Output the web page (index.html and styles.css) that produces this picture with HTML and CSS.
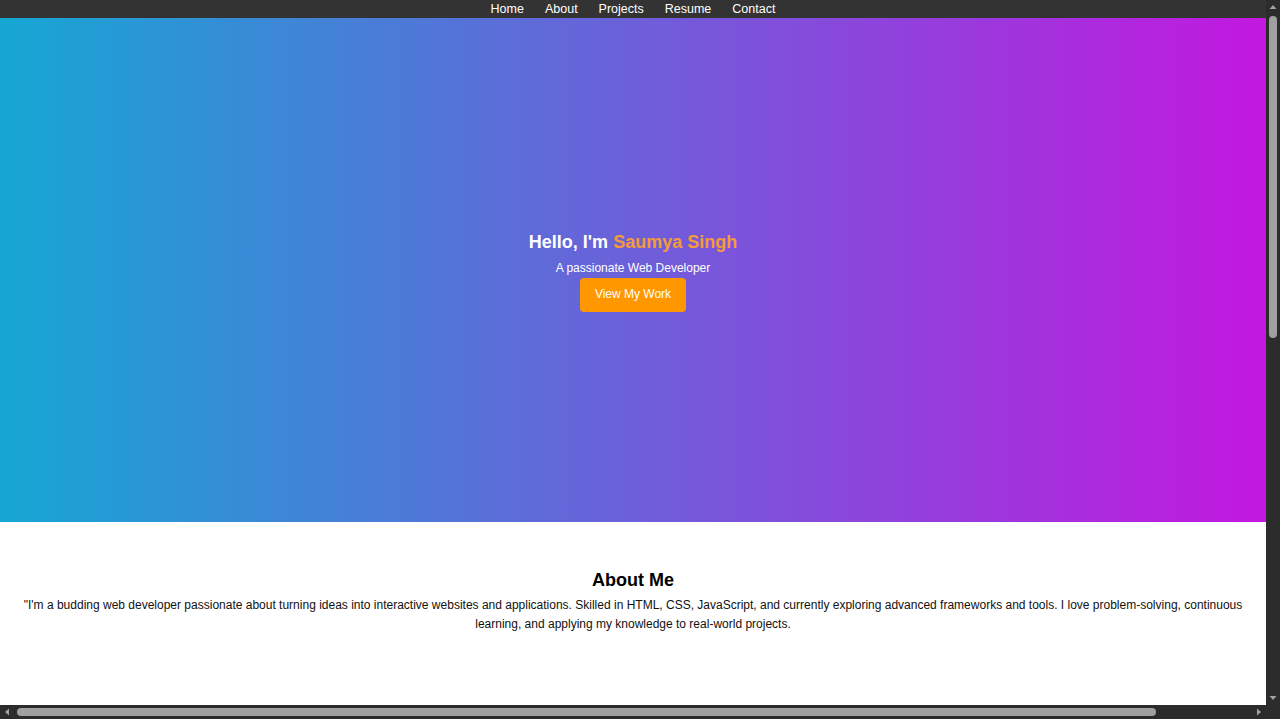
FILE: index.html
```html
<!DOCTYPE html>
<html lang="en">
<head>
<meta charset="utf-8">
<title>Saumya Singh | Portfolio</title>
<link rel="stylesheet" href="styles.css">
</head>
<body>
<div class="window">
  <div class="viewport">
    <nav class="nav">
      <a href="#home" class="nav-link">Home</a>
      <a href="#about" class="nav-link">About</a>
      <a href="#projects" class="nav-link">Projects</a>
      <a href="#resume" class="nav-link">Resume</a>
      <a href="#contact" class="nav-link">Contact</a>
    </nav>

    <header class="hero" id="home">
      <h1 class="hero-title">Hello, I'm <span class="hero-name">Saumya Singh</span></h1>
      <p class="hero-sub">A passionate Web Developer</p>
      <a href="#projects" class="btn">View My Work</a>
    </header>

    <section class="about" id="about">
      <h2 class="section-title">About Me</h2>
      <p class="section-text">"I'm a budding web developer passionate about turning ideas into interactive websites and applications. Skilled in HTML, CSS, JavaScript, and currently exploring advanced frameworks and tools. I love problem-solving, continuous learning, and applying my knowledge to real-world projects.</p>
    </section>
  </div>

  <div class="vbar">
    <svg class="arrow" width="14" height="14" viewBox="0 0 14 14"><path d="M3.5 9h7L7 5z" fill="#a3a3a3"/></svg>
    <div class="vtrack"><div class="vthumb"></div></div>
    <svg class="arrow" width="14" height="14" viewBox="0 0 14 14"><path d="M3.5 5h7L7 9z" fill="#a3a3a3"/></svg>
  </div>

  <div class="hbar">
    <svg class="arrow" width="14" height="14" viewBox="0 0 14 14"><path d="M9 3.5v7L5 7z" fill="#a3a3a3"/></svg>
    <div class="htrack"><div class="hthumb"></div></div>
    <svg class="arrow" width="14" height="14" viewBox="0 0 14 14"><path d="M5 3.5v7L9 7z" fill="#a3a3a3"/></svg>
  </div>

  <div class="corner"></div>
</div>
</body>
</html>
```

FILE: styles.css
```css
html,
body {
  margin: 0;
  height: 100%;
}

body {
  font-family: "Liberation Sans", Arial, sans-serif;
  color: #111;
  background: #ffffff;
}

.window {
  height: 100vh;
  display: grid;
  grid-template-columns: 1fr 14px;
  grid-template-rows: 1fr 14px;
  overflow: hidden;
}

.viewport {
  overflow: hidden;
  display: flex;
  flex-direction: column;
  background: #ffffff;
}

/* navigation */
.nav {
  flex: 0 0 18px;
  background: #333333;
  display: flex;
  justify-content: center;
  gap: 21px;
}
.nav-link {
  color: #ffffff;
  text-decoration: none;
  font-size: 12.5px;
  line-height: 18px;
}

/* hero */
.hero {
  flex: 0 0 504px;
  box-sizing: border-box;
  padding-top: 4px;
  background: linear-gradient(to right, #16a7d4, #c318df);
  display: flex;
  flex-direction: column;
  align-items: center;
  justify-content: center;
  color: #ffffff;
  text-align: center;
}
.hero-title {
  margin: 0 0 8px;
  font-size: 18px;
  line-height: 21px;
  font-weight: bold;
}
.hero-name {
  color: #f59b3a;
}
.hero-sub {
  margin: 0 0 2px;
  font-size: 12px;
  line-height: 15px;
}
.btn {
  display: inline-block;
  background: #ff9800;
  color: #ffffff;
  text-decoration: none;
  font-size: 12px;
  line-height: 15px;
  padding: 9px 15px 10px;
  border-radius: 4px;
}

/* about */
.about {
  padding: 48px 16px 40px;
  text-align: center;
}
.section-title {
  margin: 0 0 5px;
  font-size: 18px;
  line-height: 21px;
  font-weight: bold;
  color: #000;
}
.section-text {
  margin: 0;
  font-size: 12px;
  line-height: 19px;
  color: #111;
}

/* window scrollbars */
.vbar {
  background: #2c2c2c;
  display: flex;
  flex-direction: column;
}
.hbar {
  background: #2c2c2c;
  display: flex;
}
.corner {
  background: #2c2c2c;
}
.arrow {
  flex: 0 0 14px;
  display: block;
}
.vtrack {
  flex: 1;
  padding-top: 2px;
}
.vthumb {
  width: 8px;
  height: 322px;
  margin: 0 auto;
  background: #a0a0a0;
  border-radius: 4px;
}
.htrack {
  flex: 1;
  padding-left: 3px;
  display: flex;
  align-items: center;
}
.hthumb {
  width: 1139px;
  height: 8px;
  background: #a0a0a0;
  border-radius: 4px;
}
```
